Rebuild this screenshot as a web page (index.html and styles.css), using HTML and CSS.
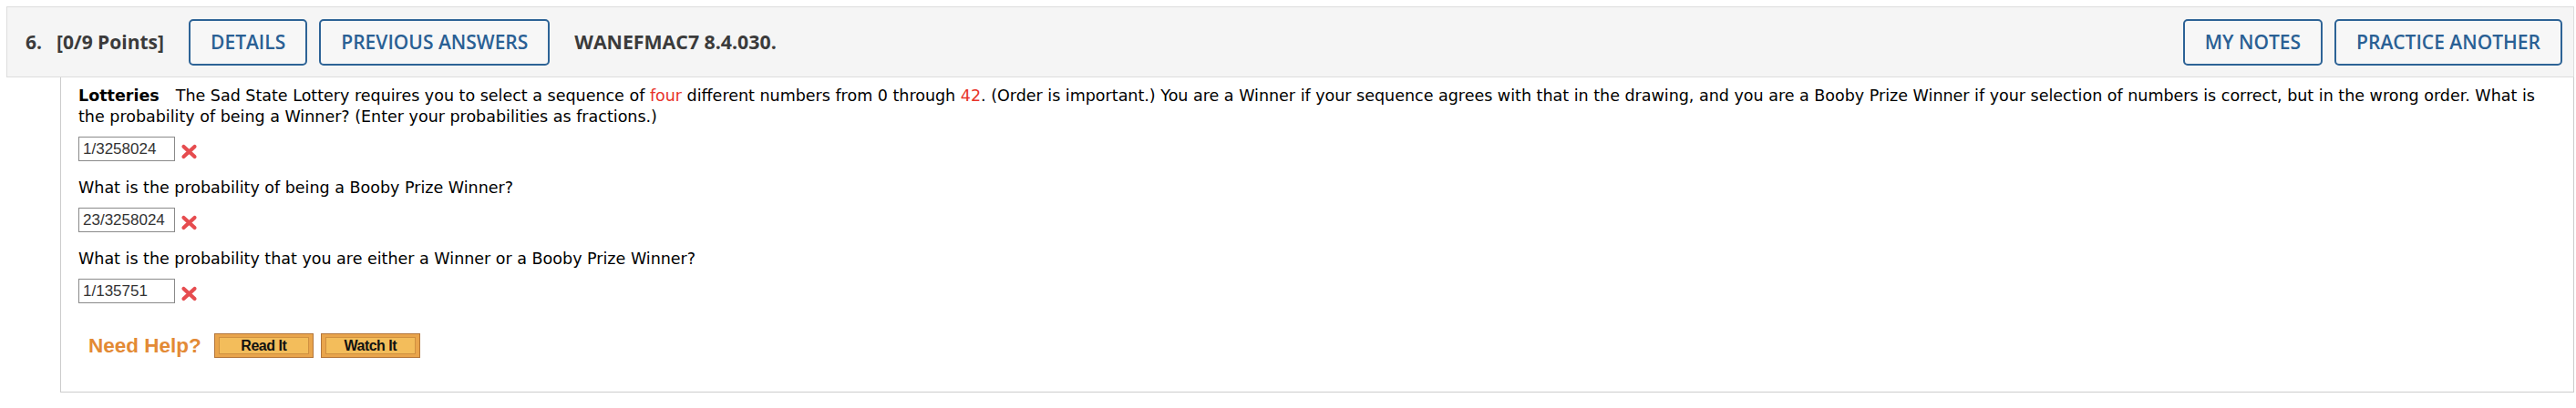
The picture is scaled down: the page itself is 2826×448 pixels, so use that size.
FILE: index.html
```html
<!DOCTYPE html>
<html>
<head>
<meta charset="utf-8">
<link rel="stylesheet" href="styles.css">
</head>
<body>
<div class="question">
  <div class="qhead">
    <div class="qgroup">
      <span class="qnum">6.</span><span class="qpts">[0/9 Points]</span>
      <a class="hbtn">DETAILS</a>
      <a class="hbtn">PREVIOUS ANSWERS</a>
      <span class="qcode">WANEFMAC7 8.4.030.</span>
    </div>
    <div class="qgroup">
      <a class="hbtn">MY NOTES</a>
      <a class="hbtn">PRACTICE ANOTHER</a>
    </div>
  </div>
  <div class="qbody">
    <p class="qtext"><b class="title">Lotteries</b>The Sad State Lottery requires you to select a sequence of <span class="red">four</span> different numbers from 0 through <span class="red">42</span>. (Order is important.) You are a Winner if your sequence agrees with that in the drawing, and you are a Booby Prize Winner if your selection of numbers is correct, but in the wrong order. What is the probability of being a Winner? (Enter your probabilities as fractions.)</p>
    <div class="answer"><span class="ans">1/3258024</span><svg class="wrong" viewBox="0 0 19 17" width="19" height="17"><path d="M3.5 3 L15.5 14 M15.5 3 L3.5 14" stroke="#e64c4f" stroke-width="4.2" stroke-linecap="round"/></svg></div>
    <p class="qtext">What is the probability of being a Booby Prize Winner?</p>
    <div class="answer"><span class="ans">23/3258024</span><svg class="wrong" viewBox="0 0 19 17" width="19" height="17"><path d="M3.5 3 L15.5 14 M15.5 3 L3.5 14" stroke="#e64c4f" stroke-width="4.2" stroke-linecap="round"/></svg></div>
    <p class="qtext">What is the probability that you are either a Winner or a Booby Prize Winner?</p>
    <div class="answer"><span class="ans">1/135751</span><svg class="wrong" viewBox="0 0 19 17" width="19" height="17"><path d="M3.5 3 L15.5 14 M15.5 3 L3.5 14" stroke="#e64c4f" stroke-width="4.2" stroke-linecap="round"/></svg></div>
    <div class="help"><span class="need">Need Help?</span><span class="hb"><span class="hbi">Read It</span></span><span class="hb"><span class="hbi">Watch It</span></span></div>
  </div>
</div>
</body>
</html>
```
FILE: styles.css
```css
html, body { margin: 0; padding: 0; background: #fff; }
body { padding: 7px 2px 0 7px; }
.question { width: 100%; }
.qhead {
  display: flex; justify-content: space-between; align-items: center;
  height: 76px; background: #f5f5f5;
  border: 1px solid #dddddd;
  padding: 0 12px 0 20px;
  font-family: "Open Sans", sans-serif;
}
.qgroup { display: flex; align-items: center; gap: 13px; }
.qnum, .qpts, .qcode { font-weight: 700; font-size: 21px; color: #3b3b3b; line-height: 28px; }
.qnum { margin-right: 3px; }
.qpts { margin-right: 14px; }
.qcode { margin-left: 14px; font-size: 21.3px; }
.hbtn {
  display: flex; align-items: center; justify-content: center;
  height: 51px; box-sizing: border-box; padding: 0 22px;
  border: 2px solid #2d6396; border-radius: 5px;
  color: #2a6094; font-weight: 600; font-size: 21px; line-height: 28px;
  background: #f7f7f7;
}
.qbody {
  margin-left: 59px;
  border: 1px solid #cccccc; border-top: none;
  padding: 9px 30px 37px 19px;
  font-family: "DejaVu Sans", Verdana, sans-serif;
  font-size: 17.5px; color: #000;
}
.qtext { margin: 0; line-height: 23px; }
.title { font-weight: 700; margin-right: 18px; }
.red { color: #e8332a; }
.answer { display: flex; align-items: center; margin: 10px 0 18px; }
.ans {
  display: flex; align-items: center;
  width: 106px; height: 27px; box-sizing: border-box;
  border: 1px solid #8a8a8a; padding-left: 4px;
  font-family: "Liberation Sans", Arial, sans-serif; font-size: 17px; color: #333;
}
.wrong { margin-left: 6px; margin-top: 5px; }
.help { display: flex; align-items: center; margin-top: 33px; padding-left: 11px; gap: 8px; }
.need {
  font-family: "Liberation Sans", Arial, sans-serif; font-weight: 700;
  font-size: 22.5px; color: #e38a35; margin-right: 6px;
}
.hb {
  display: flex; width: 109px; height: 27px; box-sizing: border-box;
  border: 1px solid #b3753a; background: #e9a54c; padding: 3px 4px;
}
.hbi {
  flex: 1; display: flex; align-items: center; justify-content: center;
  border: 1px solid #cf9040; background: #f3bd5b;
  font-family: "Liberation Sans", Arial, sans-serif; font-weight: 700;
  font-size: 16px; letter-spacing: -0.5px; color: #111;
}
```
